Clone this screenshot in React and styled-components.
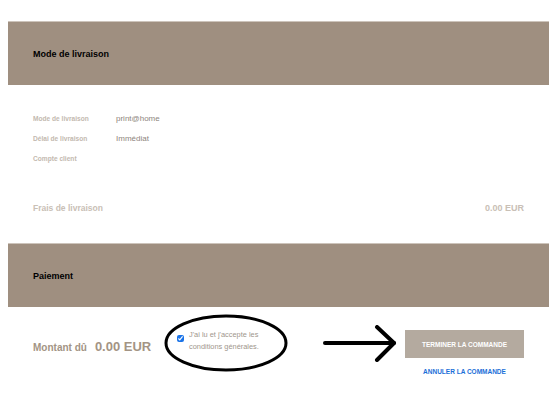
import React from "react";
import styled, { createGlobalStyle } from "styled-components";

const Global = createGlobalStyle`
  html, body { margin: 0; padding: 0; background: #fff; }
  body { font-family: "Liberation Sans", Arial, Helvetica, sans-serif; }
`;

const Page = styled.div`
  width: 541px;
  padding: 21px 10px 0 8px;
`;

const Band = styled.div`
  height: 64px;
  display: flex;
  align-items: center;
  padding-left: 25px;
  background: #9f8f80;
  border-top: 1px solid #cdc4bb;
  box-sizing: border-box;
`;

const BandTitle = styled.h2`
  margin: 0;
  font-size: 9px;
  font-weight: bold;
  color: #000;
`;

const Details = styled.div`
  padding: 23px 25px 0 25px;
`;

const InfoRow = styled.div`
  display: grid;
  grid-template-columns: 83px 1fr;
  align-items: center;
  height: 20px;
`;

const Label = styled.span`
  font-size: 6.6px;
  font-weight: bold;
  color: #c3b9af;
`;

const Value = styled.span`
  font-size: 8px;
  color: #8e857c;
`;

const FeeRow = styled.div`
  display: flex;
  justify-content: space-between;
  align-items: center;
  height: 20px;
  margin: 30px 0 25px;
`;

const FeeText = styled.span`
  font-size: ${(p) => p.$size || "8.5px"};
  font-weight: bold;
  color: #c9c0b6;
`;

const Footer = styled.div`
  display: grid;
  grid-template-columns: 144px 146px 82px 119px;
  align-items: start;
  padding: 23px 25px 0 25px;
`;

const Amount = styled.div`
  margin-top: 9px;
  display: flex;
  align-items: baseline;
  gap: 8px;
  color: #a39484;
  font-weight: bold;
  line-height: 16px;
`;

const AmountLabel = styled.span`
  font-size: 10px;
`;

const AmountValue = styled.span`
  font-size: 13px;
`;

const Terms = styled.label`
  position: relative;
  margin-top: -1px;
  display: flex;
  align-items: flex-start;
  gap: 5px;
`;

const Check = styled.input`
  margin: 6px 0 0;
  width: 7px;
  height: 7px;
  accent-color: #1a73e8;
  flex: none;
`;

const TermsText = styled.span`
  font-size: 7.4px;
  line-height: 12px;
  color: #a0968c;
`;

const Ellipse = styled.svg`
  position: absolute;
  left: -13px;
  top: -15px;
  pointer-events: none;
`;

const Arrow = styled.svg`
  margin-top: -5px;
  display: block;
`;

const Actions = styled.div`
  display: flex;
  flex-direction: column;
  align-items: center;
`;

const Primary = styled.button`
  width: 119px;
  height: 28px;
  border: none;
  background: #b4aa9f;
  color: #fff;
  font-family: inherit;
  font-size: 6.5px;
  font-weight: bold;
  padding: 0;
`;

const Cancel = styled.a`
  margin-top: 9px;
  font-size: 6.5px;
  font-weight: bold;
  line-height: 10px;
  color: #1a6fd8;
  text-decoration: none;
`;

export default function App() {
  return (
    <>
      <Global />
      <Page>
        <Band>
          <BandTitle>Mode de livraison</BandTitle>
        </Band>
        <Details>
          <InfoRow>
            <Label>Mode de livraison</Label>
            <Value>print@home</Value>
          </InfoRow>
          <InfoRow>
            <Label>Délai de livraison</Label>
            <Value>Immédiat</Value>
          </InfoRow>
          <InfoRow>
            <Label>Compte client</Label>
            <Value />
          </InfoRow>
          <FeeRow>
            <FeeText>Frais de livraison</FeeText>
            <FeeText $size="9px">0.00 EUR</FeeText>
          </FeeRow>
        </Details>
        <Band>
          <BandTitle>Paiement</BandTitle>
        </Band>
        <Footer>
          <Amount>
            <AmountLabel>Montant dû</AmountLabel>
            <AmountValue>0.00 EUR</AmountValue>
          </Amount>
          <Terms>
            <Check type="checkbox" defaultChecked />
            <TermsText>
              J'ai lu et j'accepte les
              <br />
              conditions générales.
            </TermsText>
            <Ellipse width="126" height="60" viewBox="0 0 126 60">
              <ellipse cx="62" cy="29" rx="60" ry="27" fill="none" stroke="#000" strokeWidth="3" />
            </Ellipse>
          </Terms>
          <Arrow width="74" height="37" viewBox="0 0 74 37">
            <g fill="none" stroke="#000" strokeWidth="4" strokeLinecap="round" strokeLinejoin="round">
              <line x1="2" y1="18" x2="71" y2="18" />
              <polyline points="54,2 71,18 54,35" />
            </g>
          </Arrow>
          <Actions>
            <Primary>TERMINER LA COMMANDE</Primary>
            <Cancel href="#">ANNULER LA COMMANDE</Cancel>
          </Actions>
        </Footer>
      </Page>
    </>
  );
}
